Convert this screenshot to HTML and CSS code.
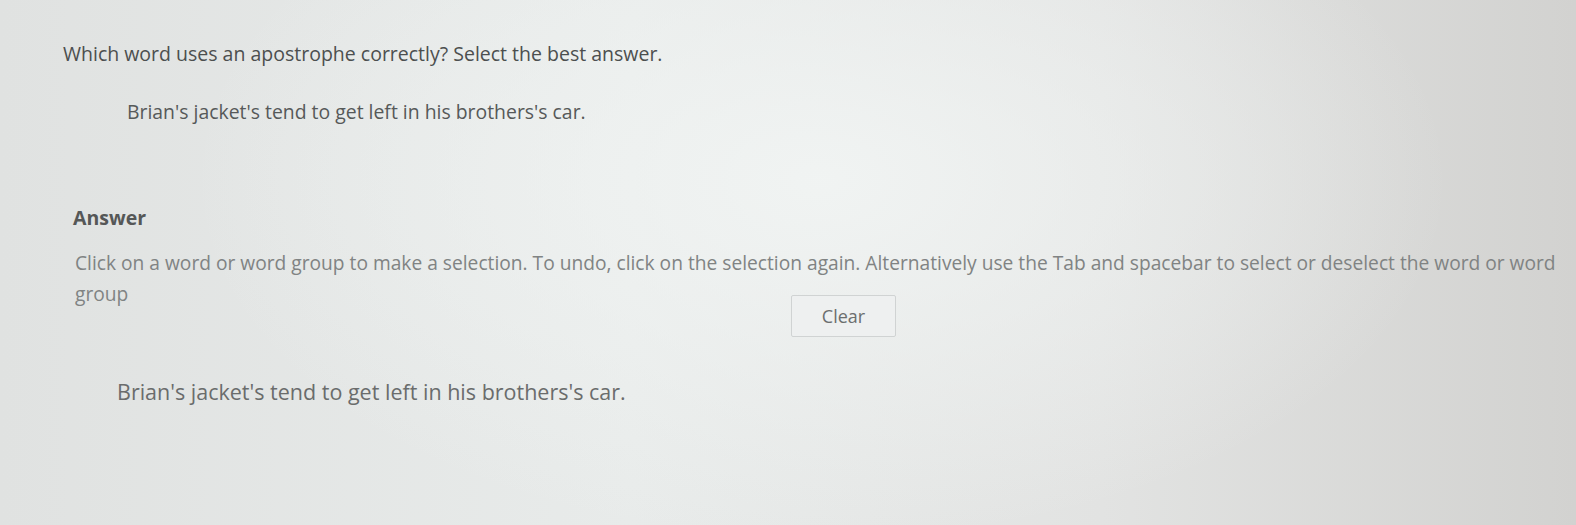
FILE: index.html
```html
<!DOCTYPE html>
<html lang="en">
<head>
<meta charset="utf-8">
<title>Apostrophe question</title>
<link rel="stylesheet" href="styles.css">
</head>
<body>
<main class="page">
  <section class="question">
    <p class="prompt">Which word uses an apostrophe correctly? Select the best answer.</p>
    <p class="sentence">Brian's jacket's tend to get left in his brothers's car.</p>
  </section>
  <section class="answer">
    <h2 class="answer-title">Answer</h2>
    <p class="instructions">Click on a word or word group to make a selection. To undo, click on the selection again. Alternatively use the Tab and spacebar to select or deselect the word or word group</p>
    <div class="actions">
      <button class="clear-btn" type="button">Clear</button>
    </div>
    <p class="choices">
      <span class="word">Brian's</span> <span class="word">jacket's</span> <span class="word">tend</span> <span class="word">to</span> <span class="word">get</span> <span class="word">left</span> <span class="word">in</span> <span class="word">his</span> <span class="word">brothers's</span> <span class="word">car.</span>
    </p>
  </section>
</main>
</body>
</html>
```
FILE: styles.css
```css
html, body {
  margin: 0;
  height: 100%;
}
body {
  font-family: "Open Sans", "Liberation Sans", sans-serif;
  color: #555;
  background:
    radial-gradient(ellipse 900px 520px at 820px 180px, rgba(241,244,243,0.95), rgba(241,244,243,0) 70%),
    linear-gradient(90deg, #e0e2e1 0%, #e8ebea 40%, #e2e3e2 70%, #d2d2d0 100%);
  overflow: hidden;
}
.page {
  padding: 41px 0 0 63px;
  width: 1500px;
}
.question p {
  margin: 0;
}
.prompt {
  font-size: 19.5px;
  color: #4c4f4f;
  line-height: 26px;
}
.question .sentence {
  margin-top: 32px;
  padding-left: 64px;
  font-size: 19.4px;
  color: #565959;
  line-height: 26px;
}
.answer {
  padding-left: 10px;
  margin-top: 81px;
}
.answer-title {
  margin: 0;
  font-size: 19.5px;
  font-weight: 700;
  color: #555757;
  line-height: 24px;
}
.instructions {
  margin: 17px 0 0 2px;
  font-size: 19.2px;
  line-height: 31px;
  color: #808383;
  width: 1490px;
}
.actions {
  display: flex;
  padding-left: 718px;
  margin-top: -14px;
}
.clear-btn {
  font-family: inherit;
  font-size: 18px;
  color: #6b6e6e;
  width: 105px;
  height: 42px;
  padding: 0;
  background: #eef0f0;
  border: 1px solid #d0d3d3;
  border-radius: 2px;
}
.choices {
  margin: 41px 0 0 44px;
  font-size: 21.5px;
  line-height: 28px;
  color: #6a6c6c;
}
```
